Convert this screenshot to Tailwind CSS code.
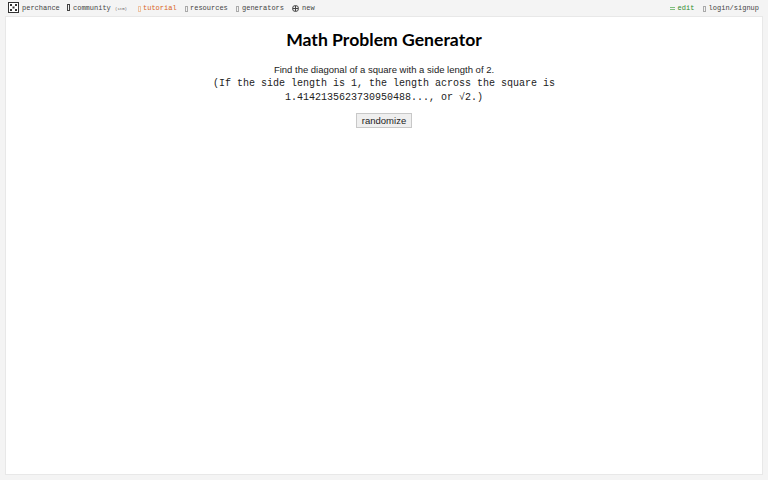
<!DOCTYPE html>
<html><head><meta charset="utf-8"><script src="https://cdn.jsdelivr.net/npm/@tailwindcss/browser@4"></script></head>
<body class="w-[768px] h-[480px] overflow-hidden bg-[#f4f4f4] flex flex-col font-['Liberation_Sans',sans-serif]">
<nav class="h-[16px] pt-[1px] flex items-center justify-between pl-[8px] pr-[9px] font-['Liberation_Mono',monospace] text-[7px] text-[#444] whitespace-nowrap">
  <div class="flex items-center">
    <svg class="w-[11px] h-[11px] mr-[3px] -mt-[3px]" viewBox="0 0 11 11"><rect x="0.5" y="0.5" width="10" height="10" fill="#fff" stroke="#333"/><rect x="2" y="2" width="2" height="2" fill="#333"/><rect x="7" y="2" width="2" height="2" fill="#333"/><rect x="4.5" y="4.5" width="2" height="2" fill="#333"/><rect x="2" y="7" width="2" height="2" fill="#333"/><rect x="7" y="7" width="2" height="2" fill="#333"/></svg>
    <span class="w-[38px]">perchance</span>
    <svg class="w-[3px] h-[7px] ml-[7px] mr-[3px] -mt-[3px]" viewBox="0 0 3 7"><rect x="0.5" y="0.5" width="2" height="6" fill="none" stroke="#444"/></svg>
    <span class="w-[39px]">community</span><span class="text-[4px] ml-[3px] w-[15px] text-[#666]">(1tm)</span>
    <svg class="w-[3px] h-[6px] ml-[8px] mr-[2px]" viewBox="0 0 3 6"><rect x="0.5" y="0.5" width="2" height="5" fill="none" stroke="#eec4a4"/></svg>
    <span class="w-[35px] text-[#d9641e]">tutorial</span>
    <svg class="w-[3px] h-[6px] ml-[7px] mr-[2px]" viewBox="0 0 3 6"><rect x="0.5" y="0.5" width="2" height="5" fill="none" stroke="#aaa"/></svg>
    <span class="w-[39px]">resources</span>
    <svg class="w-[3px] h-[6px] ml-[7px] mr-[3px]" viewBox="0 0 3 6"><rect x="0.5" y="0.5" width="2" height="5" fill="none" stroke="#aaa"/></svg>
    <span class="w-[43px]">generators</span>
    <svg class="w-[7px] h-[7px] ml-[7px] mr-[3px]" viewBox="0 0 7 7"><circle cx="3.5" cy="3.5" r="3" fill="none" stroke="#444"/><path d="M3.5 1v5M1 3.5h5" stroke="#444"/></svg>
    <span>new</span>
  </div>
  <div class="flex items-center">
    <svg class="w-[5px] h-[3px] mr-[3px]" viewBox="0 0 5 3"><path d="M0 .5h5M0 2.5h5" stroke="#7fbf7f"/></svg>
    <span class="w-[17px] text-[#2e8b2e]">edit</span>
    <svg class="w-[3px] h-[6px] ml-[8px] mr-[3px]" viewBox="0 0 3 6"><rect x="0.5" y="0.5" width="2" height="5" fill="none" stroke="#aaa"/></svg>
    <span>login/signup</span>
  </div>
</nav>
<main class="ml-[5px] mr-[5px] mb-[5px] flex-1 bg-white border border-[#e8e8e8] flex flex-col items-center text-center">
  <h1 class="mt-[12px] text-[17.6px] leading-[22px] font-bold text-black font-['Lato',sans-serif]">Math Problem Generator</h1>
  <p class="mt-[12px] text-[9.5px] leading-[14px] text-[#222]">Find the diagonal of a square with a side length of 2.</p>
  <p class="w-[360px] font-['Liberation_Mono',monospace] text-[10px] leading-[14px] text-[#222]">(If the side length is 1, the length across the square is 1.4142135623730950488..., or √2.)</p>
  <button class="mt-[8px] w-[56px] h-[15px] bg-[#efefef] border border-[#c8c8c8] text-[9.5px] leading-[13px] text-[#222]">randomize</button>
</main>
</body></html>
